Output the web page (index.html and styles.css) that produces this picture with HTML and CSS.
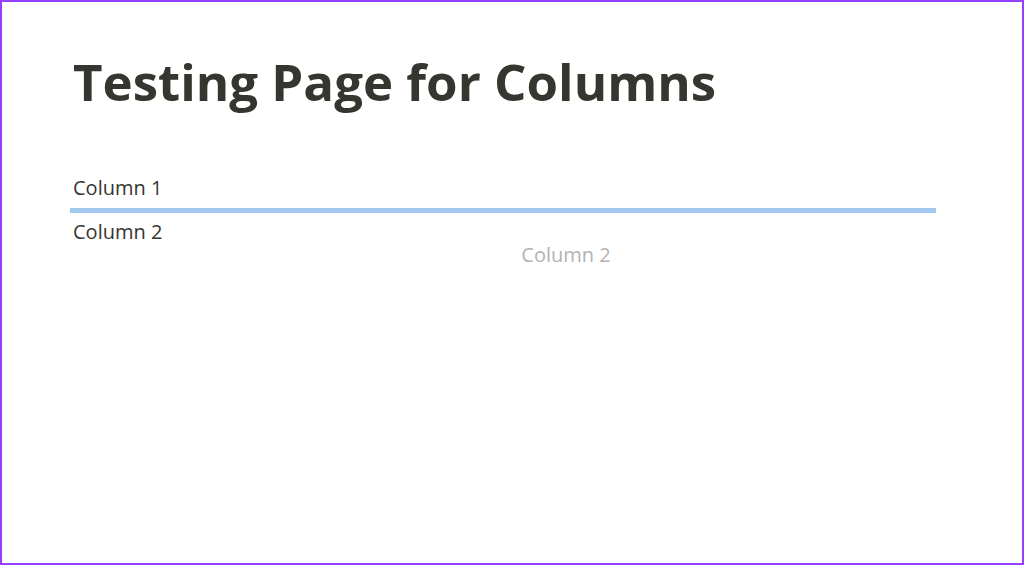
FILE: index.html
```html
<!DOCTYPE html>
<html lang="en">
  <head>
    <meta charset="UTF-8" />
    <title>Testing Page for Columns</title>
    <link rel="stylesheet" href="styles.css">
  </head>
  <body>
    <div class="frame">
      <div class="page">
        <h1 class="title">Testing Page for Columns</h1>

        <div class="blocks">
          <div class="block">Column 1</div>
          <div class="drop-line"></div>
          <div class="block">Column 2</div>
          <!-- drag preview of the block being moved -->
          <div class="ghost">Column 2</div>
        </div>
      </div>
    </div>
  </body>
</html>
```

FILE: styles.css
```css
html,
body {
  margin: 0;
  padding: 0;
  background: #ffffff;
}

body {
  font-family: "Open Sans", "Noto Sans", sans-serif;
  color: #37352f;
}

.frame {
  box-sizing: border-box;
  width: 1024px;
  height: 565px;
  border: 2px solid #9440ff;
  overflow: hidden;
}

.page {
  padding: 47px 86px 0 68px;
}

.title {
  font-size: 51px;
  font-weight: 700;
  line-height: 64px;
  margin: 0 0 0 3px;
  color: #37352f;
}

.blocks {
  margin-top: 62px;
}

.block {
  font-size: 20px;
  line-height: 26px;
  padding-left: 3px;
  color: #37352f;
}

.drop-line {
  height: 5px;
  background: #a3c8f0;
  margin: 7px 0 6px 0;
}

.ghost {
  font-size: 20px;
  line-height: 26px;
  color: #b3b3b3;
  text-align: center;
  margin-top: -3px;
  padding-left: 126px;
}
```
